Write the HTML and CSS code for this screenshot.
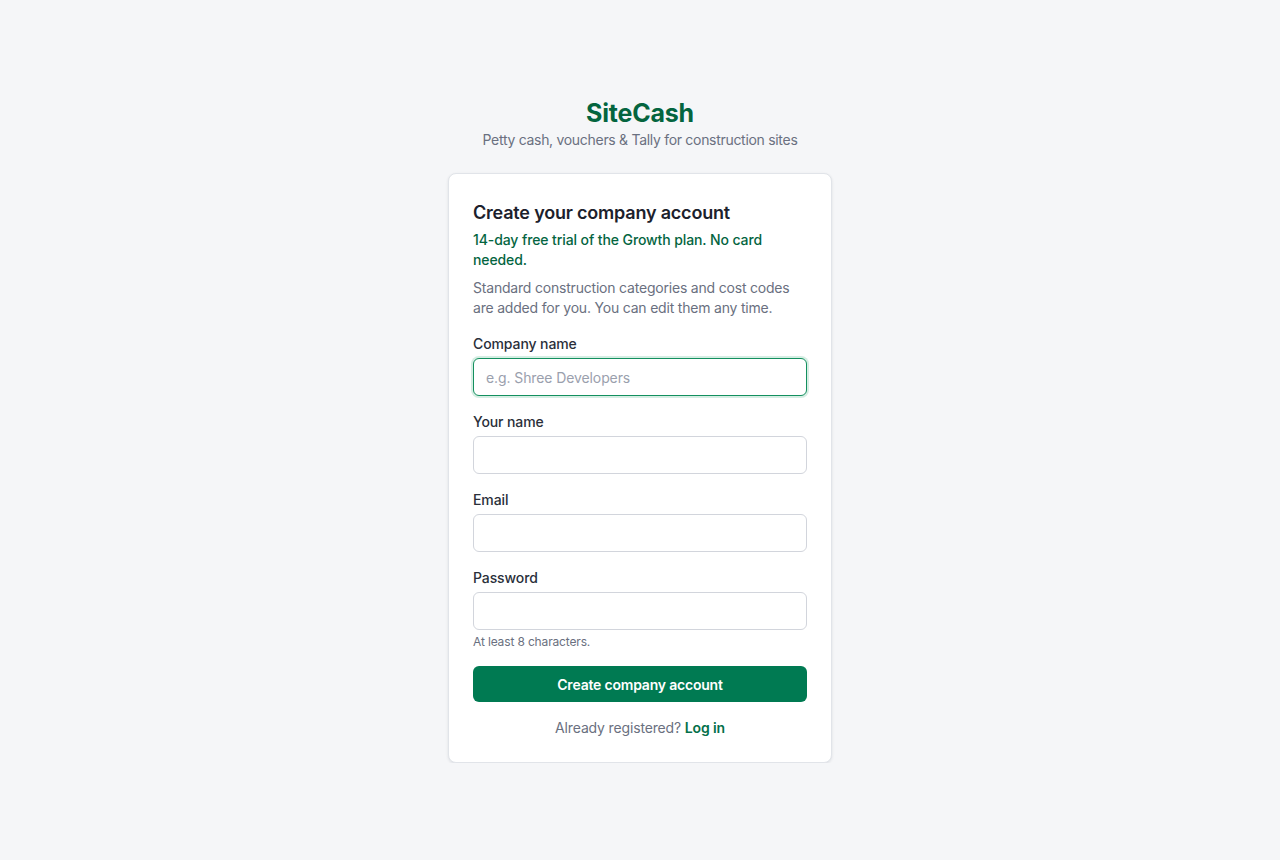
FILE: index.html
```html
<!DOCTYPE html>
<html lang="en">
<head>
<meta charset="utf-8">
<title>SiteCash — Create account</title>
<link rel="stylesheet" href="styles.css">
</head>
<body>
<main class="page">
  <header class="brand">
    <h1 class="brand-name">SiteCash</h1>
    <p class="brand-tag">Petty cash, vouchers &amp; Tally for construction sites</p>
  </header>
  <section class="card">
    <h2 class="card-title">Create your company account</h2>
    <p class="trial">14-day free trial of the Growth plan. No card needed.</p>
    <p class="desc">Standard construction categories and cost codes are added for you. You can edit them any time.</p>
    <form class="form">
      <div class="field">
        <label class="label" for="company">Company name</label>
        <input class="input input-focus" id="company" type="text" placeholder="e.g. Shree Developers">
      </div>
      <div class="field">
        <label class="label" for="name">Your name</label>
        <input class="input" id="name" type="text">
      </div>
      <div class="field">
        <label class="label" for="email">Email</label>
        <input class="input" id="email" type="email">
      </div>
      <div class="field">
        <label class="label" for="password">Password</label>
        <input class="input" id="password" type="password">
        <span class="hint">At least 8 characters.</span>
      </div>
      <button class="btn" type="button">Create company account</button>
    </form>
    <p class="footer">Already registered? <a class="link" href="#">Log in</a></p>
  </section>
</main>
</body>
</html>
```

FILE: styles.css
```css
* { box-sizing: border-box; }
html, body { margin: 0; padding: 0; }
body {
  background: #f5f6f8;
  font-family: Inter, "Noto Sans", sans-serif;
  color: #1f2430;
  -webkit-font-smoothing: antialiased;
}
.page {
  display: flex;
  flex-direction: column;
  align-items: center;
  padding-top: 98px;
}
.brand { text-align: center; margin-bottom: 23px; }
.brand-name {
  margin: 0;
  font-size: 25px;
  line-height: 30px;
  font-weight: 700;
  color: #04653f;
  letter-spacing: -0.2px;
}
.brand-tag {
  margin: 2px 0 0;
  font-size: 14px;
  line-height: 20px;
  color: #6a7080;
  letter-spacing: -0.3px;
}
.card {
  width: 384px;
  background: #fff;
  border: 1px solid #e1e4e9;
  border-radius: 8px;
  box-shadow: 0 1px 3px rgba(20, 30, 50, 0.1);
  padding: 28px 24px 24px;
}
.card-title {
  margin: 0;
  font-size: 18px;
  line-height: 22px;
  font-weight: 600;
  color: #1c212c;
  letter-spacing: -0.2px;
}
.trial {
  margin: 6px 0 0;
  font-size: 14px;
  line-height: 20px;
  font-weight: 500;
  color: #04653f;
  letter-spacing: -0.1px;
}
.desc {
  margin: 8px 0 0;
  font-size: 14px;
  line-height: 20px;
  color: #6a7080;
  letter-spacing: -0.2px;
}
.form {
  display: flex;
  flex-direction: column;
  gap: 16px;
  margin-top: 16px;
}
.field { display: flex; flex-direction: column; }
.label {
  font-size: 14px;
  line-height: 20px;
  font-weight: 500;
  color: #2a2f3a;
  margin-bottom: 4px;
  letter-spacing: -0.1px;
}
.input {
  height: 38px;
  width: 100%;
  border: 1px solid #d2d5dc;
  border-radius: 6px;
  background: #fff;
  padding: 0 12px;
  font-family: inherit;
  font-size: 14px;
  color: #1f2430;
  outline: none;
}
.input::placeholder { color: #9aa0ad; letter-spacing: -0.1px; }
.input-focus {
  border-color: #14905f;
  box-shadow: 0 0 0 2px rgba(20, 160, 100, 0.18);
}
.hint {
  margin-top: 4px;
  font-size: 12px;
  line-height: 16px;
  color: #6a7080;
  letter-spacing: -0.15px;
}
.btn {
  height: 36px;
  width: 100%;
  border: none;
  border-radius: 6px;
  background: #007a52;
  color: #fff;
  font-family: inherit;
  font-size: 14px;
  font-weight: 600;
  letter-spacing: -0.2px;
  cursor: pointer;
}
.footer {
  margin: 16px 0 0;
  text-align: center;
  font-size: 14px;
  line-height: 20px;
  color: #6a7080;
  letter-spacing: -0.15px;
}
.link {
  color: #04704a;
  font-weight: 600;
  text-decoration: none;
}
```
